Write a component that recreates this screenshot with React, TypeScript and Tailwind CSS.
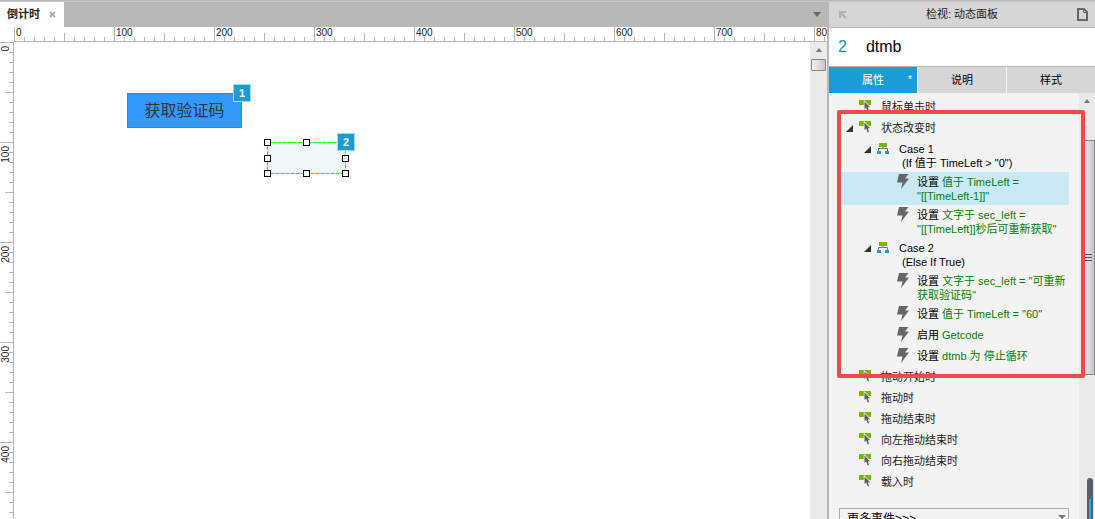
const marks: number[] = [0, 100, 200, 300, 400, 500, 600, 700, 800]
const steps: number[] = [0, 1, 2, 3, 4, 5, 6, 7, 8, 9]

const tabs: any[] = [
  { name: '属性', active: true },
  { name: '说明', active: false },
  { name: '样式', active: false },
]

const cases: any[] = [
  {
    name: 'Case 1',
    condition: '(If 值于 TimeLeft > "0")',
    actions: [
      { verb: '设置', lines: ['值于 TimeLeft =', '"[[TimeLeft-1]]"'], selected: true },
      { verb: '设置', lines: ['文字于 sec_left =', '"[[TimeLeft]]秒后可重新获取"'] },
    ],
  },
  {
    name: 'Case 2',
    condition: '(Else If True)',
    actions: [
      { verb: '设置', lines: ['文字于 sec_left = "可重新', '获取验证码"'] },
      { verb: '设置', lines: ['值于 TimeLeft = "60"'] },
      { verb: '启用', lines: ['Getcode'] },
      { verb: '设置', lines: ['dtmb 为 停止循环'] },
    ],
  },
]

const dragEvents: string[] = ['拖动开始时', '拖动时', '拖动结束时', '向左拖动结束时', '向右拖动结束时', '载入时']

const handles: string[] = [
  '-left-[3px] -top-[3px]',
  'left-[36px] -top-[3px]',
  '-right-[3px] -top-[3px]',
  '-left-[3px] top-[13px]',
  '-right-[3px] top-[13px]',
  '-left-[3px] -bottom-[3px]',
  'left-[36px] -bottom-[3px]',
  '-right-[3px] -bottom-[3px]',
]

const EventIcon = () => (
  <svg className="mt-[3px] h-[12px] w-[12px] shrink-0" viewBox="0 0 12 12">
    <path d="M0 0h12v5H0z" fill="#76b900" />
    <path
      d="M5.500 1.500v7.500l1.700-1.400L8.600 11.200h1.500L8.900 7.300H11z"
      fill="#5f5f5f"
      stroke="#f3f3f3"
      strokeWidth="1.400"
      paintOrder="stroke"
    />
  </svg>
)

const CaseIcon = () => (
  <svg className="mt-[4px] h-[12px] w-[12px] shrink-0" viewBox="0 0 12 12">
    <path d="M2 0h8v4H2z" fill="#76b900" />
    <path d="M6 4v2M1.500 8V5.500h9V8" fill="none" stroke="#777" />
    <path d="M0 8h4v3H0zM8 8h4v3H8z" fill="#1a9dd6" />
  </svg>
)

const BoltIcon = () => (
  <svg className="mt-[2px] h-[15px] w-[12px] shrink-0" viewBox="0 0 12 15">
    <path d="M2 0h9.500L8 4.500h4L4 15l1.500-6.500H0z" fill="#666" />
  </svg>
)

const Arrow = () => (
  <svg className="mt-[7px] h-[7px] w-[7px] shrink-0" viewBox="0 0 7 7">
    <path d="M7 0v7H0z" fill="#333" />
  </svg>
)

const UpArrow = () => (
  <svg className="h-[4px] w-[6px]" viewBox="0 0 6 4">
    <path d="M3 0l3 4H0z" fill="#777" />
  </svg>
)

const HorizontalRuler = () => (
  <div className="flex h-[15px] shrink-0 overflow-hidden bg-white pl-[14px]">
    {marks.map((mark) => (
      <div className="relative flex w-[100px] shrink-0 items-end border-b border-[#b4b4b4]" key={mark}>
        {steps.map((s) => (
          <div
            key={s}
            className={'w-[10px] border-l border-[#b4b4b4] ' + (s === 0 ? 'h-[14px]' : s === 5 ? 'h-[8px]' : 'h-[4px]')}
          ></div>
        ))}
        <span className="absolute left-[2px] top-0 text-[10px] leading-[12px]">{mark}</span>
      </div>
    ))}
  </div>
)

const VerticalRuler = () => (
  <div className="w-[14px] shrink-0 overflow-hidden bg-white">
    {marks.slice(0, 5).map((mark) => (
      <div className="relative flex h-[100px] flex-col items-end border-r border-[#b4b4b4]" key={mark}>
        {steps.map((s) => (
          <div
            key={s}
            className={'h-[10px] border-t border-[#b4b4b4] ' + (s === 0 ? 'w-[13px]' : s === 5 ? 'w-[8px]' : 'w-[4px]')}
          ></div>
        ))}
        <span className="absolute left-0 top-[4px] rotate-180 text-[10px] leading-[12px] [writing-mode:vertical-rl]">
          {mark}
        </span>
      </div>
    ))}
  </div>
)

const Badge = ({ n }: { n: number }) => (
  <span className="absolute -right-[9px] -top-[9px] z-10 flex h-[18px] w-[18px] items-center justify-center border border-[#9fdcf3] bg-[#1a9dd6] text-[11px] font-bold text-white">
    {n}
  </span>
)

const Canvas = () => (
  <div className="relative min-w-0 flex-1 overflow-hidden bg-white">
    <div className="absolute left-[113px] top-[51px]">
      <button className="h-[35px] w-[115px] border border-[#777] bg-[#3399ff] text-[16px] text-[#333]">获取验证码</button>
      <Badge n={1} />
    </div>
    <div className="absolute left-[253px] top-[100px] h-[32px] w-[79px]">
      <svg className="h-full w-full" viewBox="0 0 79 32">
        <rect x="0.500" y="0.500" width="78" height="31" fill="#eff7f9" stroke="#00ff00" strokeDasharray="4 1" />
      </svg>
      {handles.map((pos) => (
        <span key={pos} className={'absolute h-[7px] w-[7px] border border-black bg-white ' + pos}></span>
      ))}
      <Badge n={2} />
    </div>
  </div>
)

const EventRow = ({ name, open }: { name: string; open?: boolean }) => (
  <div className="flex h-[21px] pl-[5px]">
    <div className="w-[13px]">{open && <Arrow />}</div>
    <EventIcon />
    <span className="pl-[10px] pt-[3px]">{name}</span>
  </div>
)

const CaseRow = ({ item }: { item: any }) => (
  <>
    <div className="flex h-[33px] pl-[23px]">
      <div className="w-[13px]">
        <Arrow />
      </div>
      <CaseIcon />
      <p className="whitespace-nowrap pl-[10px] pt-[3px] text-black">
        {item.name}
        <br />
        <span className="pl-[3px]">{item.condition}</span>
      </p>
    </div>
    {item.actions.map((action: any, i: number) => (
      <div
        key={i}
        className={'flex min-h-[21px] pb-[2px] pl-[56px] ' + (action.selected ? 'bg-[#cae9f7]' : '')}
      >
        <BoltIcon />
        <p className="whitespace-nowrap pl-[8px] pt-[3px] text-[#008000]">
          <span className="text-black">{action.verb}</span> {action.lines[0]}
          {action.lines[1] && <br />}
          {action.lines[1]}
        </p>
      </div>
    ))}
  </>
)

const Inspector = () => (
  <aside className="flex w-[268px] shrink-0 flex-col border-l-2 border-[#b8b8b8] bg-[#f3f3f3]">
    <header className="flex h-[26px] shrink-0 items-center justify-between border-b border-[#b8b8b8] bg-[#d6d6d6] pl-[10px] pr-[7px]">
      <svg className="h-[8px] w-[8px]" viewBox="0 0 8 8">
        <path d="M1 7V1h6M1 1l6 6" fill="none" stroke="#b0b0b0" strokeWidth="2" />
      </svg>
      <h2 className="text-[11px] text-[#222]">检视: 动态面板</h2>
      <svg className="h-[13px] w-[11px]" viewBox="0 0 11 13">
        <path d="M1 1h6l3 3v8H1z" fill="none" stroke="#666" strokeWidth="2" />
        <path d="M6.500 1v3.500H10" fill="none" stroke="#666" />
      </svg>
    </header>
    <div className="flex h-[39px] shrink-0 items-center gap-[19px] border-b border-[#b8b8b8] bg-white pl-[9px] text-[16px]">
      <span className="text-[#1a8cc0]">2</span>
      <span className="text-black">dtmb</span>
    </div>
    <div className="grid h-[26px] shrink-0 grid-cols-3 gap-px bg-[#f3f3f3]">
      {tabs.map((tab) => (
        <button
          key={tab.name}
          className={'relative text-[11px] ' + (tab.active ? 'bg-[#1a9dd6] text-white' : 'bg-[#d6d6d6] text-black')}
        >
          {tab.name}
          {tab.active && <span className="absolute right-[5px] top-[4px]">*</span>}
        </button>
      ))}
    </div>
    <div className="relative flex min-h-0 flex-1">
      <div className="min-w-0 flex-1 overflow-hidden px-[10px] pt-[4px]">
        <div className="pl-[2px] text-[11px] leading-[14px] text-[#222]">
          <EventRow name="鼠标单击时" />
          <EventRow name="状态改变时" open />
          {cases.map((item) => (
            <CaseRow item={item} key={item.name} />
          ))}
          {dragEvents.map((name) => (
            <EventRow name={name} key={name} />
          ))}
        </div>
        <div className="relative mt-[13px]">
          <select
            aria-label="更多事件"
            className="h-[22px] w-full appearance-none border border-[#aaa] bg-[#f3f3f3] pl-[7px] text-[12px] text-black"
          >
            <option>更多事件&gt;&gt;&gt;</option>
          </select>
          <svg className="absolute right-[3px] top-[9px] h-[4px] w-[8px]" viewBox="0 0 8 4">
            <path d="M0 0h8L4 4z" fill="#777" />
          </svg>
        </div>
      </div>
      <div className="relative flex w-[16px] shrink-0 flex-col items-center bg-[#eaeaea] pt-[6px]">
        <UpArrow />
        <div className="mt-[37px] flex h-[235px] w-[14px] flex-col items-center justify-center gap-[2px] self-end border border-[#888] bg-linear-to-r from-[#f4f4f4] to-[#c4c4c8]">
          <i className="h-px w-[7px] bg-[#555]"></i>
          <i className="h-px w-[7px] bg-[#555]"></i>
          <i className="h-px w-[7px] bg-[#555]"></i>
        </div>
        <div className="absolute bottom-0 right-[2px] h-[41px] w-[6px] rounded-t-[3px] bg-[#56616e] px-[2px] pt-[21px]">
          <div className="h-full bg-[#22a7ee]"></div>
        </div>
      </div>
      <div className="pointer-events-none absolute left-[8px] right-[10px] top-[17px] h-[268px] rounded-[2px] border-4 border-[#ef4b4b]"></div>
    </div>
  </aside>
)

const App = () => {
  return (
    <div className="flex h-screen flex-col overflow-hidden bg-[#b8b8b8] pt-px font-['Liberation_Sans','Noto_Sans_CJK_SC',sans-serif] text-[#222]">
      <div className="flex min-h-0 flex-1 border-t border-[#c4c4c4]">
        <main className="flex min-w-0 flex-1 flex-col">
          <div className="flex h-[25px] shrink-0 items-center justify-between pr-[6px]">
            <div className="flex h-full items-center gap-[9px] bg-white pl-[7px] pr-[8px]">
              <span className="text-[11px] font-bold">倒计时</span>
              <button aria-label="关闭">
                <svg className="h-[7px] w-[7px]" viewBox="0 0 7 7">
                  <path d="M1 1l5 5M6 1L1 6" stroke="#b0b0b0" strokeWidth="2" />
                </svg>
              </button>
            </div>
            <svg className="h-[5px] w-[8px]" viewBox="0 0 8 5">
              <path d="M0 0h8L4 5z" fill="#666" />
            </svg>
          </div>
          <HorizontalRuler />
          <div className="flex min-h-0 flex-1">
            <VerticalRuler />
            <Canvas />
            <div className="flex w-[17px] shrink-0 flex-col items-center bg-[#eaeaea] pt-[6px]">
              <UpArrow />
              <div className="mt-[7px] h-[12px] w-[15px] rounded-[1px] border border-[#888] bg-linear-to-r from-[#f4f4f4] to-[#c8c8c8]"></div>
            </div>
          </div>
        </main>
        <Inspector />
      </div>
    </div>
  )
}

export default App
